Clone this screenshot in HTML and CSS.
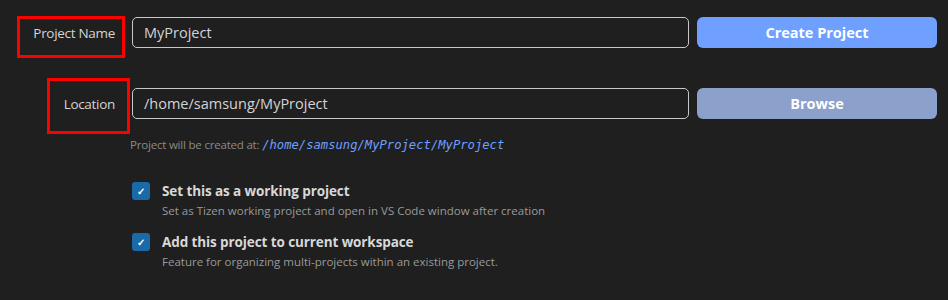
FILE: index.html
```html
<!DOCTYPE html>
<html lang="en">
<head>
    <meta charset="UTF-8">
    <meta name="viewport" content="width=device-width, initial-scale=1.0">
    <title>Create Project</title>
    <link rel="stylesheet" href="styles.css">
</head>
<body>
    <div class="form">
        <div class="label">
            <span class="mark mark-name"></span>
            Project Name
        </div>
        <input class="field" type="text" value="MyProject">
        <button class="btn btn-create">Create Project</button>

        <div class="label">
            <span class="mark mark-loc"></span>
            Location
        </div>
        <input class="field" type="text" value="/home/samsung/MyProject">
        <button class="btn btn-browse">Browse</button>
    </div>

    <div class="options">
        <p class="hint">Project will be created at: <code>/home/samsung/MyProject/MyProject</code></p>

        <div class="check">
            <span class="box">&#10003;</span>
            <div>
                <div class="check-title">Set this as a working project</div>
                <div class="check-desc">Set as Tizen working project and open in VS Code window after creation</div>
            </div>
        </div>

        <div class="check">
            <span class="box">&#10003;</span>
            <div>
                <div class="check-title">Add this project to current workspace</div>
                <div class="check-desc">Feature for organizing multi-projects within an existing project.</div>
            </div>
        </div>
    </div>
</body>
</html>
```

FILE: styles.css
```css
body {
    margin: 0;
    background-color: #1f1f1f;
    color: #cccccc;
    font-family: "Open Sans", "Noto Sans", sans-serif;
}

.form {
    display: grid;
    grid-template-columns: 124px 557px 240px;
    grid-auto-rows: 31px;
    column-gap: 8px;
    row-gap: 40px;
    padding-top: 17px;
}

.label {
    position: relative;
    display: flex;
    align-items: center;
    justify-content: flex-end;
    padding-right: 9px;
    font-size: 13.5px;
    color: #d4d4d4;
    letter-spacing: -0.3px;
}

/* red annotation boxes drawn over the labels */
.mark {
    position: absolute;
    border: 3px solid #ff0000;
    box-sizing: border-box;
}

.mark-name {
    left: 17px;
    top: -1px;
    width: 108px;
    height: 42px;
}

.mark-loc {
    left: 47px;
    top: -10px;
    width: 83px;
    height: 56px;
}

.field {
    box-sizing: border-box;
    height: 31px;
    margin: 0;
    padding: 0 11px;
    background-color: #1f1f1f;
    border: 1px solid #c8c8c8;
    border-radius: 5px;
    color: #d4d4d4;
    font-family: inherit;
    font-size: 14.5px;
    outline: none;
}

.btn {
    height: 31px;
    border: none;
    border-radius: 6px;
    color: #ffffff;
    font-family: inherit;
    font-size: 14.5px;
    font-weight: 700;
}

.btn-create {
    background-color: #6fa0ff;
}

.btn-browse {
    background-color: #8ba0ca;
}

.options {
    padding-left: 130px;
}

.hint {
    margin: 18px 0 0 0;
    font-size: 11.5px;
    color: #8a8a8a;
    letter-spacing: -0.2px;
}

.hint code {
    font-family: "DejaVu Sans Mono", monospace;
    font-style: italic;
    font-size: 12.2px;
    color: #6f9fff;
    letter-spacing: 0;
}

.check {
    display: flex;
    align-items: flex-start;
    gap: 12px;
    margin-left: 2px;
    margin-top: 30px;
}

.check + .check {
    margin-top: 15px;
}

.box {
    flex: none;
    width: 18px;
    height: 18px;
    border-radius: 3px;
    background-color: #1a6aa8;
    color: #ffffff;
    font-size: 10px;
    font-weight: 700;
    display: flex;
    align-items: center;
    justify-content: center;
}

.check-title {
    font-size: 13.5px;
    font-weight: 700;
    color: #d8d8d8;
    line-height: 18px;
    letter-spacing: -0.1px;
}

.check-desc {
    margin-top: 3px;
    font-size: 11.5px;
    color: #9a9a9a;
}
```
